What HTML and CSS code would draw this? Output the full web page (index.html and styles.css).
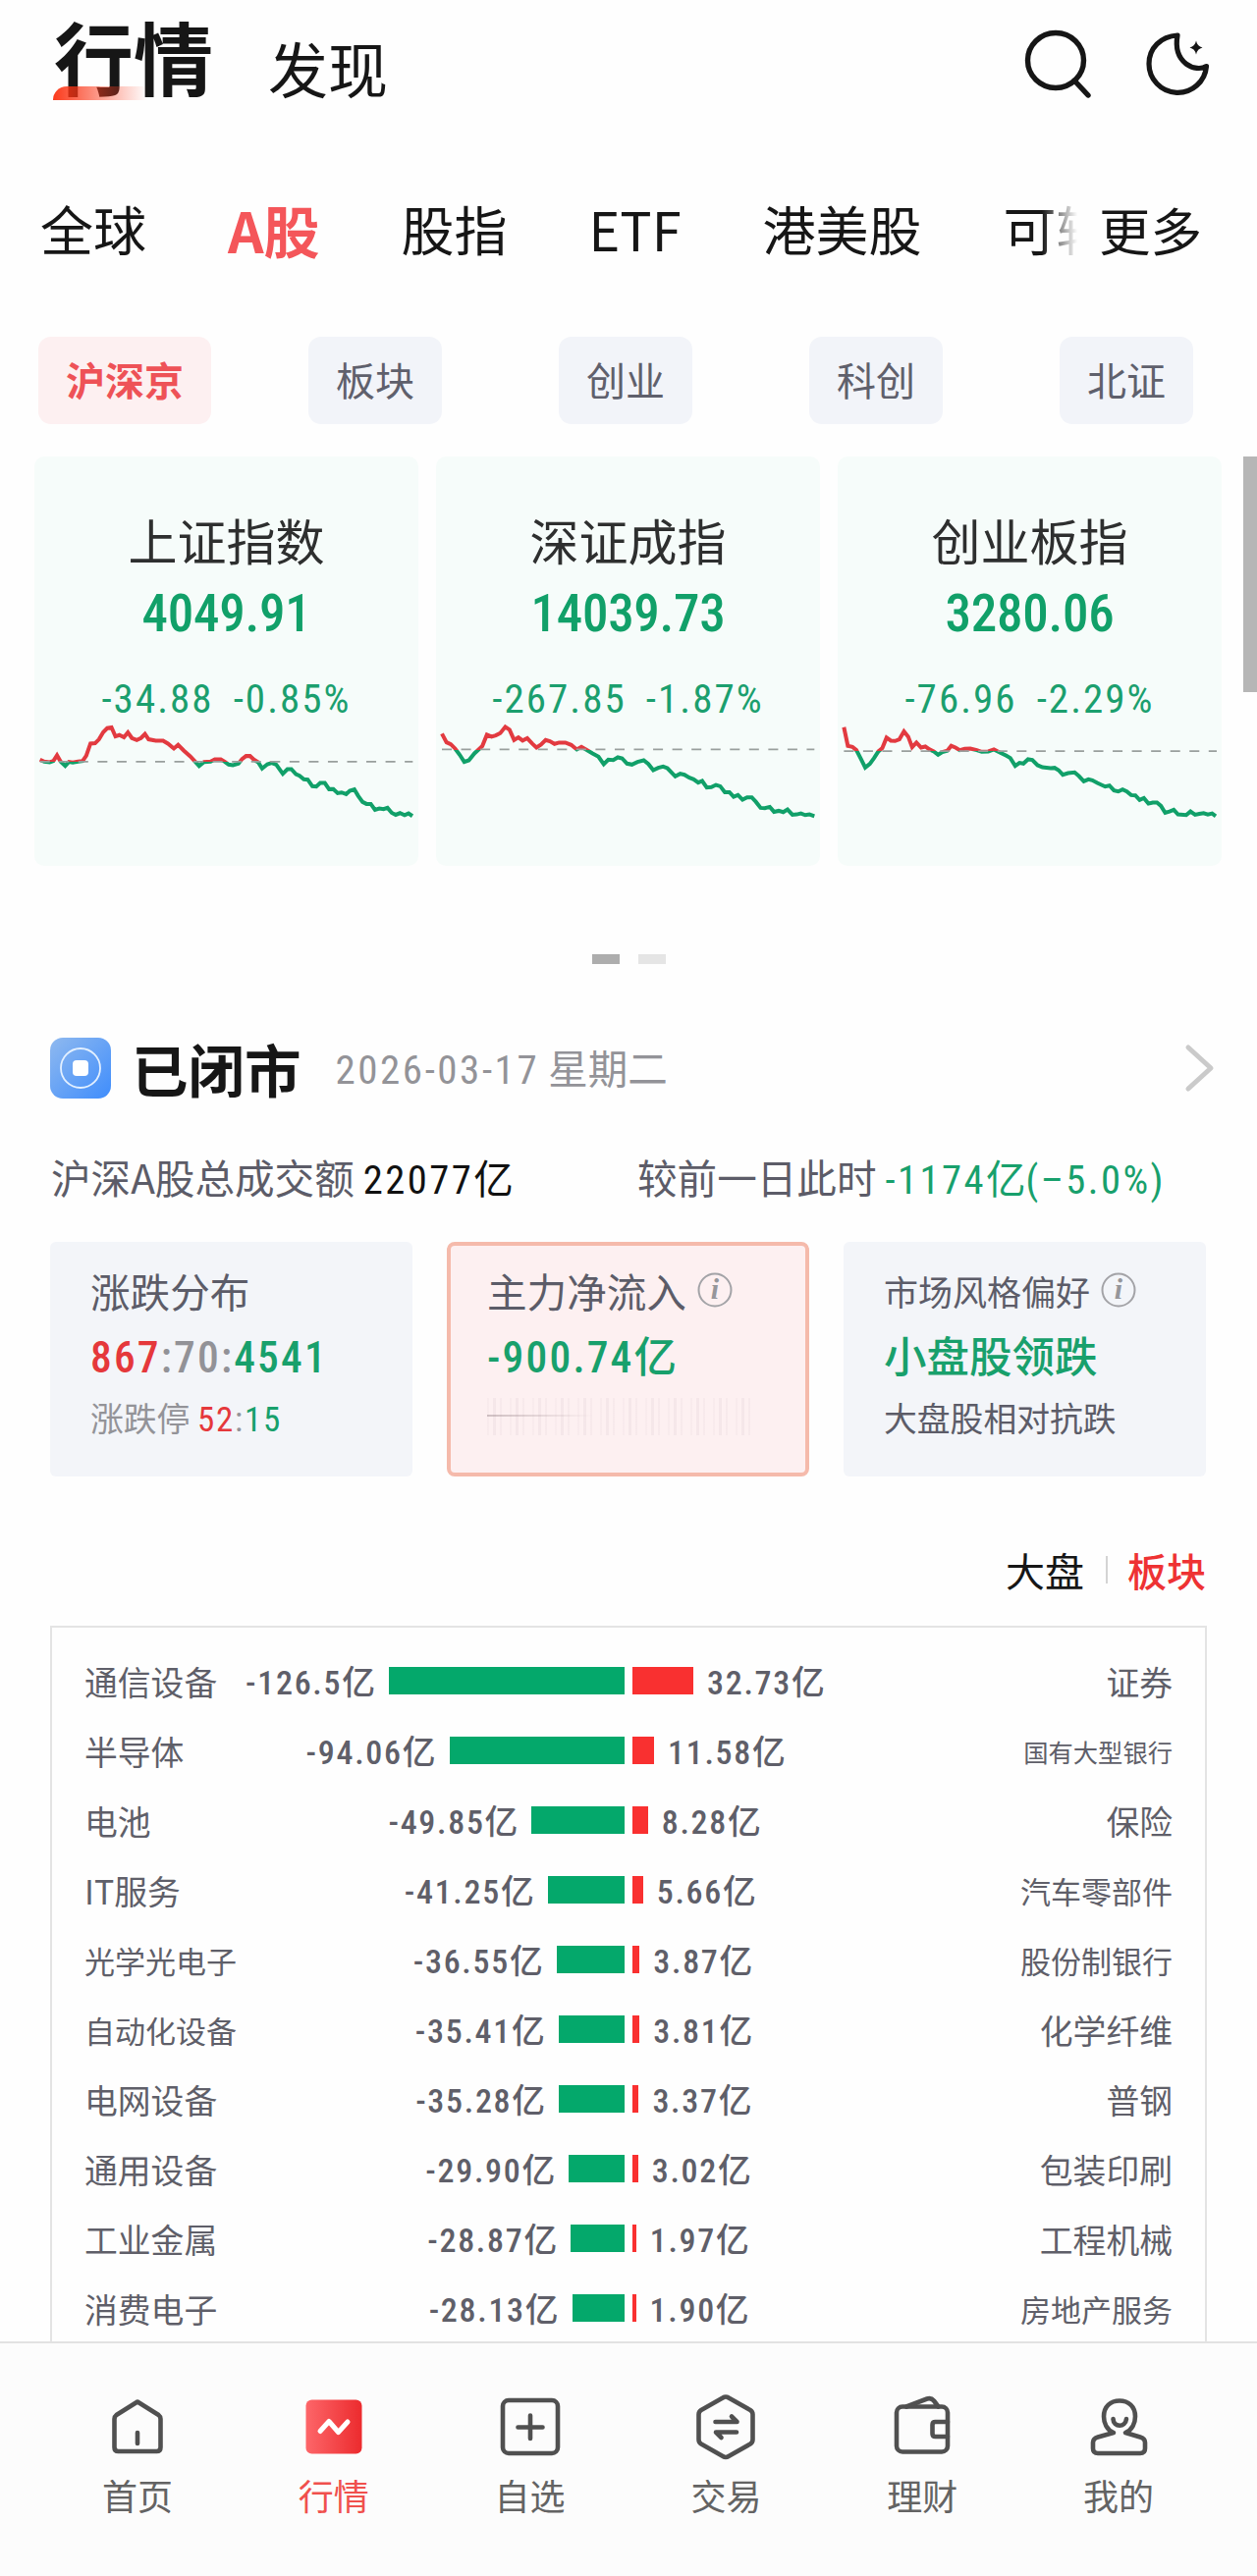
FILE: index.html
```
<!DOCTYPE html>
<html lang="zh-CN">
<head>
  <meta charset="UTF-8">
  <meta name="viewport" content="width=device-width, initial-scale=1.0">
  <title>行情</title>
  <link rel="stylesheet" href="styles.css">
</head>
<body>

  <!-- Header -->
  <header class="header">
    <h1 class="title">行情</h1>
    <span class="subtitle">发现</span>
    <div class="header-icons">
      <svg width="74" height="74" viewBox="0 0 74 74" fill="none" stroke="#161616" stroke-width="5.4" stroke-linecap="round">
        <ellipse cx="35" cy="33.500" rx="28.5" ry="28"/>
        <path d="M54 54L68 69"/>
      </svg>
      <svg width="74" height="74" viewBox="0 0 74 74" fill="none" stroke="#161616" stroke-width="5.2" stroke-linejoin="round">
        <path d="M35 8C18 9 6 21 6 37a29.300 29.300 0 0 0 58.500 2.500C54 46 30 37 35 8z"/>
        <path d="M54 13.500q1.200 5.800 6.500 7q-5.300 1.200-6.500 7q-1.200-5.800-6.500-7q5.300-1.200 6.500-7z" fill="#161616" stroke="none"/>
      </svg>
    </div>
  </header>

  <!-- Market tabs -->
  <nav class="tabs">
    <div class="tab-list">
      <span>全球</span>
      <span class="active">A股</span>
      <span>股指</span>
      <span>ETF</span>
      <span>港美股</span>
      <span>可转</span>
    </div>
    <span class="more">更多</span>
  </nav>

  <div class="chips">
    <span class="chip active">沪深京</span>
    <span class="chip">板块</span>
    <span class="chip">创业</span>
    <span class="chip">科创</span>
    <span class="chip">北证</span>
  </div>

  <!-- Index cards -->
  <div class="cards">
    <div class="card">
      <h2>上证指数</h2>
      <div class="price num">4049.91</div>
      <div class="change num"><span>-34.88</span><span>-0.85%</span></div>
      <svg class="chart" viewBox="105 880 1170 320">
        <defs>
          <linearGradient id="g1" gradientUnits="userSpaceOnUse" x1="0" y1="880" x2="0" y2="1200">
            <stop offset="0.4" stop-color="#e23a40"/><stop offset="0.4" stop-color="#11a069"/>
          </linearGradient>
        </defs>
        <polyline stroke="url(#g1)" points="122,1002 135,1008 152,1010 163,1006 174,989 185,1008 199,1021 210,1009 222,1011 238,1008 252,1006 263,990 276,953 290,952 302,940 315,918 327,906 340,904 352,931 364,927 378,934 390,919 402,936 417,942 430,936 442,924 453,940 475,944 497,944 512,953 530,968 543,957 560,974 580,992 607,1021 622,1009 642,1008 655,1001 673,1001 685,1008 697,1017 710,1019 727,1014 738,1000 750,991 762,991 774,1002 787,1010 799,1029 815,1016 828,1012 842,1017 862,1045 876,1031 888,1031 902,1046 913,1051 926,1062 938,1063 952,1083 964,1084 976,1073 990,1073 1003,1092 1016,1092 1029,1104 1041,1102 1055,1107 1066,1097 1080,1093 1092,1113 1105,1131 1117,1137 1130,1137 1143,1155 1156,1151 1169,1153 1181,1149 1194,1164 1206,1170 1219,1165 1233,1171 1245,1166 1257,1174"/>
        <path class="base" d="M122 1008H1258"/>
      </svg>
    </div>
    <div class="card">
      <h2>深证成指</h2>
      <div class="price num">14039.73</div>
      <div class="change num"><span>-267.85</span><span>-1.87%</span></div>
      <svg class="chart" viewBox="43 880 1170 320">
        <defs>
          <linearGradient id="g2" gradientUnits="userSpaceOnUse" x1="0" y1="880" x2="0" y2="1200">
            <stop offset="0.285" stop-color="#e23a40"/><stop offset="0.285" stop-color="#11a069"/>
          </linearGradient>
        </defs>
        <polyline stroke="url(#g2)" points="61,923 75,949 88,955 101,968 115,987 129,1009 143,1004 160,983 184,961 198,926 212,932 225,928 239,921 254,902 267,911 281,942 294,934 307,944 321,937 336,953 349,965 363,956 377,942 390,946 404,954 418,950 437,950 455,957 472,971 486,963 500,971 520,983 538,993 554,1016 568,1002 583,1003 597,995 610,998 625,1014 640,1017 657,1009 676,1004 690,1015 705,1034 720,1027 735,1023 748,1028 772,1053 787,1045 800,1048 815,1057 828,1062 842,1072 854,1067 868,1087 882,1086 896,1079 909,1083 923,1101 937,1101 950,1115 963,1110 977,1124 991,1117 1005,1117 1018,1131 1032,1149 1045,1150 1060,1146 1073,1161 1087,1158 1101,1162 1114,1154 1129,1170 1142,1169 1155,1166 1168,1171 1181,1169 1196,1174"/>
        <path class="base" d="M61 971H1196"/>
      </svg>
    </div>
    <div class="card">
      <h2>创业板指</h2>
      <div class="price num">3280.06</div>
      <div class="change num"><span>-76.96</span><span>-2.29%</span></div>
      <svg class="chart" viewBox="41 880 1170 320">
        <defs>
          <linearGradient id="g3" gradientUnits="userSpaceOnUse" x1="0" y1="880" x2="0" y2="1200">
            <stop offset="0.303" stop-color="#e23a40"/><stop offset="0.303" stop-color="#11a069"/>
          </linearGradient>
        </defs>
        <polyline stroke="url(#g3)" points="60,903 72,960 86,963 98,973 112,1000 125,1026 139,1015 152,997 165,977 177,967 190,935 203,944 216,945 229,940 243,916 256,932 268,964 281,950 295,965 308,962 321,971 334,977 347,987 360,979 375,975 387,960 400,965 413,973 428,969 445,968 465,973 480,978 500,977 517,971 535,980 555,990 567,997 582,1021 595,1012 607,1014 621,1001 634,1003 650,1019 665,1025 690,1028 702,1027 714,1034 727,1048 743,1043 763,1041 776,1052 791,1068 805,1062 817,1065 832,1073 856,1084 869,1081 883,1096 896,1099 909,1093 922,1099 935,1110 948,1111 961,1125 974,1119 988,1136 1001,1133 1014,1133 1026,1143 1039,1164 1052,1160 1065,1155 1078,1169 1103,1171 1116,1160 1130,1170 1143,1167 1156,1165 1169,1169 1182,1166 1193,1174"/>
        <path class="base" d="M60 976H1196"/>
      </svg>
    </div>
  </div>
  <div class="scrollbar"></div>

  <div class="dots"><i class="on"></i><i></i></div>

  <!-- Market status -->
  <div class="status">
    <svg width="62" height="62" viewBox="0 0 62 62">
      <defs>
        <linearGradient id="blue" x1="0" y1="0" x2="1" y2="1">
          <stop offset="0" stop-color="#8fb9ef"/><stop offset="1" stop-color="#3f8dfc"/>
        </linearGradient>
      </defs>
      <rect width="62" height="62" rx="13" fill="url(#blue)"/>
      <circle cx="31" cy="31" r="20" fill="none" stroke="#e3f0ff" stroke-width="1.800"/>
      <rect x="23" y="23" width="16" height="16" rx="4" fill="#fff"/>
    </svg>
    <h2>已闭市</h2>
    <span class="date"><span class="num">2026-03-17</span> 星期二</span>
    <svg class="chevron" width="32" height="52" viewBox="0 0 32 52" fill="none" stroke="#cacaca" stroke-width="5" stroke-linecap="round" stroke-linejoin="round">
      <path d="M5 5L28 26L5 47"/>
    </svg>
  </div>

  <div class="turnover">
    <div>沪深A股总成交额 <b><span class="num">22077</span>亿</b></div>
    <div>较前一日此时 <em><span class="num">-1174</span>亿<span class="num">(–5.0%)</span></em></div>
  </div>

  <div class="boxes">
    <div class="box">
      <div class="box-title">涨跌分布</div>
      <div class="box-value"><span class="num"><span class="red">867</span><span class="gray">:70:</span>4541</span></div>
      <div class="box-note gray">涨跌停 <span class="num"><span class="red">52</span>:<span class="green">15</span></span></div>
    </div>
    <div class="box selected">
      <div class="box-title">主力净流入
        <svg class="info" viewBox="0 0 36 36"><circle cx="18" cy="18" r="16.500"/><text x="18" y="27">i</text></svg>
      </div>
      <div class="box-value"><span class="num">-900.74</span>亿</div>
      <div class="box-note"><span class="hidden-note"></span></div>
    </div>
    <div class="box">
      <div class="box-title small">市场风格偏好
        <svg class="info" viewBox="0 0 36 36"><circle cx="18" cy="18" r="16.500"/><text x="18" y="27">i</text></svg>
      </div>
      <div class="box-value">小盘股领跌</div>
      <div class="box-note">大盘股相对抗跌</div>
    </div>
  </div>

  <div class="switch">
    <span>大盘</span>
    <i></i>
    <span class="active">板块</span>
  </div>

  <!-- Sector money flow -->
  <div class="flow">
    <div class="row">
      <div class="out"><span class="name">通信设备</span><span class="val"><span class="num">-126.5</span>亿</span><i style="width: 240px"></i></div>
      <div class="in"><i style="width: 62px"></i><span class="val"><span class="num">32.73</span>亿</span><span class="name">证券</span></div>
    </div>
    <div class="row">
      <div class="out"><span class="name">半导体</span><span class="val"><span class="num">-94.06</span>亿</span><i style="width: 178.500px"></i></div>
      <div class="in"><i style="width: 22px"></i><span class="val"><span class="num">11.58</span>亿</span><span class="name xs">国有大型银行</span></div>
    </div>
    <div class="row">
      <div class="out"><span class="name">电池</span><span class="val"><span class="num">-49.85</span>亿</span><i style="width: 94.600px"></i></div>
      <div class="in"><i style="width: 15.700px"></i><span class="val"><span class="num">8.28</span>亿</span><span class="name">保险</span></div>
    </div>
    <div class="row">
      <div class="out"><span class="name">IT服务</span><span class="val"><span class="num">-41.25</span>亿</span><i style="width: 78.300px"></i></div>
      <div class="in"><i style="width: 10.700px"></i><span class="val"><span class="num">5.66</span>亿</span><span class="name sm">汽车零部件</span></div>
    </div>
    <div class="row">
      <div class="out"><span class="name sm">光学光电子</span><span class="val"><span class="num">-36.55</span>亿</span><i style="width: 69.300px"></i></div>
      <div class="in"><i style="width: 7.300px"></i><span class="val"><span class="num">3.87</span>亿</span><span class="name sm">股份制银行</span></div>
    </div>
    <div class="row">
      <div class="out"><span class="name sm">自动化设备</span><span class="val"><span class="num">-35.41</span>亿</span><i style="width: 67.200px"></i></div>
      <div class="in"><i style="width: 7.200px"></i><span class="val"><span class="num">3.81</span>亿</span><span class="name">化学纤维</span></div>
    </div>
    <div class="row">
      <div class="out"><span class="name">电网设备</span><span class="val"><span class="num">-35.28</span>亿</span><i style="width: 66.900px"></i></div>
      <div class="in"><i style="width: 6.400px"></i><span class="val"><span class="num">3.37</span>亿</span><span class="name">普钢</span></div>
    </div>
    <div class="row">
      <div class="out"><span class="name">通用设备</span><span class="val"><span class="num">-29.90</span>亿</span><i style="width: 56.700px"></i></div>
      <div class="in"><i style="width: 5.700px"></i><span class="val"><span class="num">3.02</span>亿</span><span class="name">包装印刷</span></div>
    </div>
    <div class="row">
      <div class="out"><span class="name">工业金属</span><span class="val"><span class="num">-28.87</span>亿</span><i style="width: 54.800px"></i></div>
      <div class="in"><i style="width: 3.700px"></i><span class="val"><span class="num">1.97</span>亿</span><span class="name">工程机械</span></div>
    </div>
    <div class="row">
      <div class="out"><span class="name">消费电子</span><span class="val"><span class="num">-28.13</span>亿</span><i style="width: 53.400px"></i></div>
      <div class="in"><i style="width: 3.600px"></i><span class="val"><span class="num">1.90</span>亿</span><span class="name sm">房地产服务</span></div>
    </div>
  </div>

  <!-- Bottom navigation -->
  <nav class="bottom-nav">
    <a>
      <svg viewBox="0 0 70 70">
        <path d="M35 9.500L13.500 23Q11.500 24.500 11.500 27V56Q11.500 60 15.500 60H54.500Q58.500 60 58.500 56V27Q58.500 24.500 56.500 23Z"/>
        <path d="M35 41V52"/>
      </svg>
      首页
    </a>
    <a class="active">
      <svg viewBox="0 0 70 70">
        <defs>
          <linearGradient id="red" x1="0" y1="0" x2="1" y2="0">
            <stop offset="0" stop-color="#fd6669"/><stop offset="1" stop-color="#ec2b2e"/>
          </linearGradient>
        </defs>
        <rect x="6.500" y="7.500" width="57" height="55" rx="6" fill="url(#red)" stroke="none"/>
        <path d="M21 39.500L30 29.500L39.500 40.500L49 30" stroke="#fff" stroke-width="5"/>
      </svg>
      行情
    </a>
    <a>
      <svg viewBox="0 0 70 70">
        <rect x="7" y="8" width="56" height="54" rx="6"/>
        <path d="M35 23.500V47M22.500 35.500H47.500"/>
      </svg>
      自选
    </a>
    <a>
      <svg viewBox="0 0 70 70">
        <path d="M32 5.500Q35 3.500 38 5.500L60 18Q62.500 19.500 62.500 22.500V48Q62.500 51 60 52.500L38 65Q35 67 32 65L10 52.500Q7.500 51 7.500 48V22.500Q7.500 19.500 10 18Z"/>
        <path d="M24.500 30H46.500L41 24.500M46 40.500H25L30.500 46"/>
      </svg>
      交易
    </a>
    <a>
      <svg viewBox="0 0 70 70">
        <rect x="9" y="14.500" width="52" height="46" rx="6"/>
        <path d="M61 30H48.500Q45.500 30 45.500 33V42Q45.500 45 48.500 45H61M19 14.500L40 6.500Q44 5 47 8.500L51.500 14.500"/>
      </svg>
      理财
    </a>
    <a>
      <svg viewBox="0 0 70 70">
        <path d="M30 41C23 38 20 31 20 24.500C20 14 27 8.500 36 8.500S52 14 52 24.500C52 31 49 38 42 41L57 45.500Q62 47 62 51V57Q62 62 57 62H14Q9 62 9 57V51Q9 47 14 45.500Z"/>
        <path d="M29.500 27C30 36 42 36 43 27"/>
      </svg>
      我的
    </a>
  </nav>

</body>
</html>
```
FILE: styles.css
```
* {
  box-sizing: border-box;
}

body {
  margin: 0;
  width: 1280px;
  height: 2624px;
  overflow: hidden;
  display: flex;
  flex-direction: column;
  background-color: #fefefe;
  color: #161616;
  font-family: "Noto Sans CJK SC", sans-serif;
}

h1, h2 {
  margin: 0;
}

i, em, b {
  font-style: normal;
  font-weight: normal;
}

.num {
  font-family: "Roboto Condensed", Roboto, sans-serif;
  letter-spacing: 0.05em;
}

.red { color: #e5383b; }
.green { color: #18a06c; }
.gray { color: #929297; }

/* Header */
.header {
  display: flex;
  height: 120px;
  padding: 0 42px 0 55px;
}

.title {
  position: relative;
  font-size: 81px;
  line-height: 112px;
  height: 112px;
  font-weight: 700;
}

.title::after {
  content: "";
  position: absolute;
  left: -1px;
  top: 88px;
  width: 96px;
  height: 14px;
  border-top-left-radius: 14px;
  background: linear-gradient(90deg, rgba(251, 48, 16, 0.95), rgba(251, 60, 30, 0.5) 50%, rgba(251, 80, 50, 0));
}

.subtitle {
  margin-left: 56px;
  font-size: 61px;
  line-height: 138px;
}

.header-icons {
  display: flex;
  gap: 50px;
  margin-left: auto;
  padding-top: 28px;
}

/* Tabs */
.tabs {
  display: flex;
  height: 90px;
  margin-top: 70px;
  padding-left: 41px;
  font-size: 54px;
  line-height: 86px;
}

.tab-list {
  display: flex;
  gap: 83px;
  width: 1056px;
  overflow: hidden;
  white-space: nowrap;
  -webkit-mask-image: linear-gradient(90deg, #000 1020px, transparent);
  mask-image: linear-gradient(90deg, #000 1020px, transparent);
}

.tab-list .active {
  color: #f4565a;
  font-size: 57px;
  font-weight: 700;
}

.more {
  margin-left: 22px;
  font-size: 52.500px;
}

.chips {
  display: flex;
  gap: 119px;
  margin-top: 63px;
  padding-left: 39px;
}

.chip {
  height: 89px;
  padding: 0 28px;
  border-radius: 13px;
  background-color: #f2f4f9;
  color: #5f606c;
  font-size: 40px;
  line-height: 87px;
}

.chip.active {
  margin-right: -20px;
  background-color: #fdf0f1;
  color: #ee5257;
  font-weight: 700;
}

/* Index cards */
.cards {
  display: flex;
  gap: 18px;
  margin-top: 33px;
  padding-left: 35px;
}

.card {
  width: 391px;
  height: 417px;
  padding-top: 47px;
  border-radius: 10px;
  background-color: #f6fcfa;
  text-align: center;
}

.card h2 {
  color: #2e2f2f;
  font-size: 50px;
  font-weight: 400;
  line-height: 74px;
}

.price {
  color: #11a069;
  font-size: 53px;
  font-weight: 500;
  line-height: 78px;
  letter-spacing: -0.005em;
}

.change {
  display: flex;
  justify-content: center;
  gap: 20px;
  margin-top: 11px;
  color: #1b9f6e;
  font-size: 41px;
  line-height: 74px;
}

.chart {
  display: block;
  width: 391px;
  height: 107px;
  margin-top: -16px;
}

.chart polyline {
  fill: none;
  stroke-width: 12;
}

.base {
  fill: none;
  stroke: #999f9d;
  stroke-width: 5;
  stroke-dasharray: 30 28.500;
}

.scrollbar {
  position: absolute;
  right: 0;
  top: 465px;
  width: 14px;
  height: 240px;
  background-color: #b6b6b6;
}

.dots {
  display: flex;
  justify-content: center;
  gap: 19px;
  margin-top: 90px;
}

.dots i {
  width: 28px;
  height: 10px;
  background-color: #e5e5e5;
}

.dots .on {
  background-color: #adadad;
}

/* Market status */
.status {
  display: flex;
  align-items: center;
  height: 62px;
  margin-top: 75px;
  padding: 0 43px 0 51px;
}

.status h2 {
  margin-left: 21px;
  font-size: 57.500px;
  line-height: 62px;
}

.date {
  margin-left: 35px;
  color: #939398;
  font-size: 40.500px;
  line-height: 66px;
}

.date .num {
  font-size: 41px;
  letter-spacing: 0.062em;
}

.chevron {
  margin-left: auto;
}

.turnover {
  display: flex;
  height: 60px;
  margin-top: 50px;
  padding-left: 52px;
  color: #5c5c68;
  font-size: 40.600px;
  line-height: 60px;
}

.turnover div {
  width: 597px;
  white-space: nowrap;
}

.turnover .num {
  letter-spacing: 0.06em;
}

.turnover b {
  color: #111;
}

.turnover em {
  color: #18a06c;
}

.boxes {
  display: flex;
  gap: 35px;
  margin-top: 36px;
  padding-left: 51px;
}

.box {
  width: 369px;
  height: 239px;
  padding: 20px 0 0 41px;
  border-radius: 6px;
  background-color: #f3f5f9;
  color: #5c5c68;
  white-space: nowrap;
}

.box.selected {
  padding: 16px 0 0 37px;
  border: 4px solid #f5baab;
  border-radius: 8px;
  background-color: #fdf0f1;
}

.box-title {
  display: flex;
  align-items: center;
  gap: 11px;
  height: 60px;
  font-size: 40.600px;
  line-height: 60px;
}

.box-title.small {
  font-size: 35px;
}

.info {
  width: 36px;
  height: 36px;
  fill: #96969a;
  margin-top: -2px;
}

.info circle {
  fill: none;
  stroke: #a3a3a7;
  stroke-width: 2;
}

.info text {
  font-family: "Liberation Serif", serif;
  font-size: 30px;
  font-style: italic;
  font-weight: 700;
  text-anchor: middle;
}

.box-value {
  height: 66px;
  color: #18a06c;
  font-size: 43.500px;
  font-weight: 500;
  line-height: 70px;
}

.box-note {
  height: 66px;
  font-size: 33.800px;
  line-height: 66px;
}

.box-note.gray {
  color: #939398;
}

.box-note .num {
  font-size: 35px;
}

/* masked value, only faint stripes are visible */
.hidden-note {
  display: block;
  width: 270px;
  height: 38px;
  margin-top: 13px;
  background:
    linear-gradient(90deg, rgba(140, 120, 125, 0.4), transparent 40%) 0 17px / 100% 2px no-repeat,
    repeating-linear-gradient(90deg, rgba(140, 110, 130, 0.04) 0 2px, transparent 2px 6px, rgba(140, 110, 130, 0.07) 6px 9px, transparent 9px 13px, rgba(140, 110, 130, 0.05) 13px 15px, transparent 15px 23px);
}

.switch {
  display: flex;
  justify-content: flex-end;
  align-items: center;
  height: 60px;
  margin-top: 65px;
  padding-right: 52px;
  font-size: 40px;
  line-height: 56px;
}

.switch i {
  width: 2px;
  height: 28px;
  margin: 0 20px 0 22px;
  background-color: #d4d4d4;
}

.switch .active {
  color: #ee3233;
  font-weight: 500;
}

/* Sector money flow */
.flow {
  flex: 1;
  min-height: 0;
  margin: 27px 51px 0;
  padding: 19px 33px 0;
  border: 2px solid #e4e4e4;
  border-bottom: none;
}

.row {
  display: grid;
  grid-template-columns: 1fr 1fr;
  gap: 8px;
  height: 71px;
  color: #5f5f69;
  font-size: 33.800px;
  line-height: 66px;
  white-space: nowrap;
}

.out, .in {
  display: flex;
  align-items: center;
  gap: 14px;
}

.out i, .in i {
  height: 28px;
  margin-top: -2px;
  background-color: #04a86b;
}

.in i {
  background-color: #f93030;
}

.name.sm { font-size: 31px; }
.name.xs { font-size: 25.300px; }

.out .name {
  margin-right: auto;
}

.in .name {
  margin-left: auto;
}

.val {
  font-weight: 500;
}

.val .num {
  font-size: 34px;
}

/* Bottom navigation */
.bottom-nav {
  display: flex;
  height: 239px;
  padding: 50px 41px 0 40px;
  border-top: 2px solid #e2e2e2;
  background-color: #fcfcfc;
}

.bottom-nav a {
  flex: 1;
  display: flex;
  flex-direction: column;
  align-items: center;
  color: #636363;
  font-size: 36px;
  line-height: 68px;
}

.bottom-nav svg {
  width: 70px;
  height: 70px;
  fill: none;
  stroke: #505050;
  stroke-width: 4.600;
  stroke-linecap: round;
  stroke-linejoin: round;
}

.bottom-nav .active {
  color: #f0504d;
}
```
